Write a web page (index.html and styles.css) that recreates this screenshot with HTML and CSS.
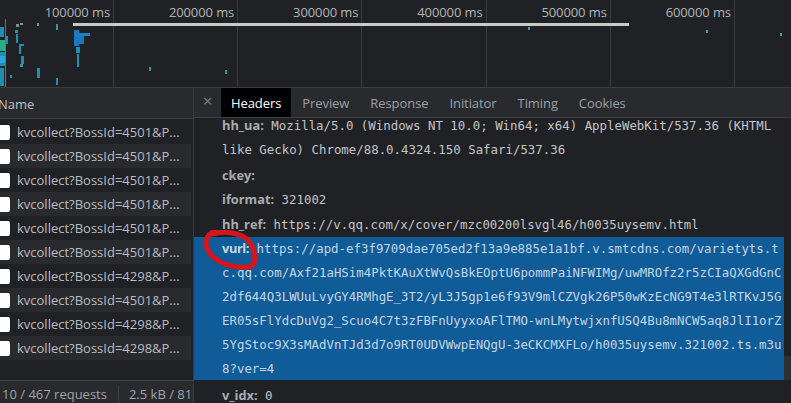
FILE: index.html
```html
<!DOCTYPE html>
<html lang="en">
<head>
<meta charset="utf-8">
<title>Network</title>
<link rel="stylesheet" href="styles.css">
</head>
<body>
<div class="overview">
  <div class="ticks">
    <div class="tick tick-first">100000 ms</div>
    <div class="tick">200000 ms</div>
    <div class="tick">300000 ms</div>
    <div class="tick">400000 ms</div>
    <div class="tick">500000 ms</div>
    <div class="tick">600000 ms</div>
    <div class="tick tick-last"></div>
  </div>
  <svg class="marks" width="791" height="87" viewBox="0 0 791 87">
    <rect x="73" y="23" width="556" height="3" fill="#c9c9c7"/>
    <g fill="#1d8fb3">
      <rect x="0" y="27" width="4" height="10"/>
      <rect x="0" y="52" width="5" height="14"/>
      <rect x="0" y="68" width="4" height="18"/>
      <rect x="6" y="36" width="2" height="8"/>
      <rect x="16" y="24" width="3" height="3" fill="#7f8f92"/>
      <rect x="20" y="23" width="3" height="2" fill="#7f8f92"/>
      <rect x="37" y="23" width="2" height="3" fill="#7f8f92"/>
      <rect x="56" y="24" width="2" height="6" fill="#3a8fa3"/>
      <rect x="15" y="30" width="3" height="3"/>
      <rect x="16" y="34" width="2" height="9"/>
      <rect x="19" y="44" width="5" height="2"/>
      <rect x="19" y="46" width="2" height="8"/>
      <rect x="21" y="56" width="3" height="8"/>
      <rect x="20" y="64" width="3" height="3" fill="#3a8fa3"/>
      <rect x="37" y="68" width="3" height="10"/>
      <rect x="10" y="75" width="2" height="3"/>
      <rect x="56" y="78" width="2" height="7"/>
      <rect x="74" y="30" width="5" height="16" fill="#1a78c0"/>
      <rect x="78" y="33" width="12" height="3" fill="#1a82c8"/>
      <rect x="78" y="36" width="6" height="8" fill="#1a78c0"/>
      <rect x="76" y="47" width="4" height="6"/>
      <rect x="77" y="54" width="2" height="13"/>
      <rect x="149" y="67" width="2" height="4" fill="#2f9aa5"/>
      <rect x="225" y="70" width="2" height="4" fill="#2f9aa5"/>
      <rect x="528" y="27" width="2" height="3" fill="#43a0a0"/>
      <rect x="706" y="30" width="2" height="3" fill="#43a0a0"/>
      <rect x="780" y="33" width="2" height="3" fill="#43a0a0"/>
    </g>
    <rect x="0" y="40" width="5" height="11" fill="#2bab86"/>
    <rect x="0" y="56" width="5" height="7" fill="#2aa6d8"/>
    <rect x="5" y="19" width="1" height="68" fill="#c9494f"/>
  </svg>
</div>
<div class="main">
  <section class="list">
    <div class="list-head"><span class="name-title">Name</span></div>
    <ul class="rows">
      <li class="row"><span class="check"></span><span class="req">kvcollect?BossId=4501&amp;P...</span></li>
      <li class="row row-alt"><span class="check"></span><span class="req">kvcollect?BossId=4501&amp;P...</span></li>
      <li class="row"><span class="check"></span><span class="req">kvcollect?BossId=4501&amp;P...</span></li>
      <li class="row row-alt"><span class="check"></span><span class="req">kvcollect?BossId=4501&amp;P...</span></li>
      <li class="row"><span class="check"></span><span class="req">kvcollect?BossId=4501&amp;P...</span></li>
      <li class="row row-alt"><span class="check"></span><span class="req">kvcollect?BossId=4501&amp;P...</span></li>
      <li class="row"><span class="check"></span><span class="req">kvcollect?BossId=4298&amp;P...</span></li>
      <li class="row row-alt"><span class="check"></span><span class="req">kvcollect?BossId=4501&amp;P...</span></li>
      <li class="row"><span class="check"></span><span class="req">kvcollect?BossId=4298&amp;P...</span></li>
      <li class="row row-alt"><span class="check"></span><span class="req">kvcollect?BossId=4298&amp;P...</span></li>
    </ul>
    <div class="status">
      <span class="status-item">10 / 467 requests</span>
      <span class="status-item status-next">2.5 kB / 81</span>
    </div>
  </section>
  <section class="detail">
    <div class="tabs">
      <span class="close">×</span>
      <span class="tab tab-on">Headers</span>
      <span class="tab">Preview</span>
      <span class="tab">Response</span>
      <span class="tab">Initiator</span>
      <span class="tab">Timing</span>
      <span class="tab">Cookies</span>
    </div>
    <div class="headers">
      <p class="item item-first"><b class="key">hh_ua:</b> Mozilla/5.0 (Windows NT 10.0; Win64; x64) AppleWebKit/537.36 (KHTML<br>like Gecko) Chrome/88.0.4324.150 Safari/537.36</p>
      <p class="item"><b class="key">ckey:</b></p>
      <p class="item"><b class="key">iformat:</b> 321002</p>
      <p class="item"><b class="key">hh_ref:</b> https://v.qq.com/x/cover/mzc00200lsvgl46/h0035uysemv.html</p>
      <p class="item item-sel"><b class="key key-sel">vurl:</b> https://apd-ef3f9709dae705ed2f13a9e885e1a1bf.v.smtcdns.com/varietyts.t<br>c.qq.com/Axf21aHSim4PktKAuXtWvQsBkEOptU6pommPaiNFWIMg/uwMROfz2r5zCIaQXGdGnC<br>2df644Q3LWUuLvyGY4RMhgE_3T2/yL3J5gp1e6f93V9mlCZVgk26P50wKzEcNG9T4e3lRTKvJ5G<br>ER05sFlYdcDuVg2_Scuo4C7t3zFBFnUyyxoAFlTMO-wnLMytwjxnfUSQ4Bu8mNCW5aq8JlI1orZ<br>5YgStoc9X3sMAdVnTJd3d7o9RT0UDVWwpENQgU-3eCKCMXFLo/h0035uysemv.321002.ts.m3u<br>8?ver=4</p>
      <p class="item"><b class="key">v_idx:</b> 0</p>
      <svg class="circle" width="60" height="46" viewBox="0 0 60 46">
        <path d="M12 1 C4 3 0 10 3 18 C6 27 16 33 28 36 C38 38 48 38 50 33 C52 25 49 15 43 9 C35 3 21 0 8 4" fill="none" stroke="#d5141c" stroke-width="5" stroke-linecap="round"/>
      </svg>
      <div class="scroll-thumb"></div>
    </div>
  </section>
</div>
</body>
</html>
```
FILE: styles.css
```css
* { box-sizing: border-box; }
html, body { margin: 0; height: 100%; overflow: hidden; }
body {
  background: #202124;
  color: #bdc1c6;
  font-family: "Open Sans", "Noto Sans", sans-serif;
  font-size: 13px;
  width: 791px;
  height: 403px;
  display: flex;
  flex-direction: column;
}
.overview {
  position: relative;
  height: 88px;
  flex: none;
  border-bottom: 1px solid #3a3b3d;
  overflow: hidden;
}
.ticks { display: flex; height: 100%; }
.tick {
  flex: none;
  width: 124.2px;
  border-right: 1px solid #3a3b3d;
  text-align: right;
  padding: 4px 3px 0 0;
  line-height: 17px;
  color: #b3b5b8;
  white-space: nowrap;
  letter-spacing: -0.1px;
}
.tick-first { width: 114px; }
.tick-last { flex: 1; border-right: 0; }
.marks { position: absolute; left: 0; top: 0; }
.main { flex: 1; display: flex; min-height: 0; }
.list {
  flex: none;
  width: 194px;
  border-right: 1px solid #3a3b3d;
  display: flex;
  flex-direction: column;
  overflow: hidden;
}
.list-head {
  height: 31px;
  flex: none;
  background: #292a2d;
  border-bottom: 1px solid #3f4042;
  display: flex;
  align-items: center;
  padding-top: 1px;
}
.name-title { margin-left: -2px; color: #bdc1c6; }
.rows { list-style: none; margin: 0; padding: 1px 0 0; flex: 1; background: #202124; }
.row {
  height: 24px;
  margin-right: 2px;
  display: flex;
  align-items: center;
  gap: 7px;
}
.row-alt { background: #292a2d; }
.check {
  flex: none;
  width: 15px;
  height: 15px;
  margin-left: -5px;
  background: #fff;
  border-radius: 2px;
}
.req { color: #b9bcc0; white-space: nowrap; }
.status {
  height: 23px;
  flex: none;
  background: #292a2d;
  border-top: 1px solid #3f4042;
  display: flex;
  align-items: flex-start;
  padding-top: 5px;
  line-height: 17px;
  white-space: nowrap;
  color: #a0a3a7;
}
.status-item { padding-left: 2px; padding-right: 11px; }
.status-next { border-left: 1px solid #3f4042; padding-left: 10px; }
.detail {
  flex: 1;
  min-width: 0;
  display: flex;
  flex-direction: column;
  overflow: hidden;
}
.tabs {
  height: 30px;
  flex: none;
  background: #292a2d;
  border-bottom: 1px solid #3f4042;
  display: flex;
  align-items: stretch;
  color: #9aa0a6;
}
.close {
  width: 27px;
  flex: none;
  text-align: center;
  font-size: 17px;
  line-height: 26px;
  color: #7d8084;
}
.tab { padding: 0 10px; line-height: 31px; white-space: nowrap; margin-right: 1px; letter-spacing: -0.08px; }
.tab-on { background: #000; color: #fff; height: 29px; }
.headers {
  position: relative;
  flex: 1;
  min-height: 0;
  font-family: "DejaVu Sans Mono", monospace;
  font-size: 12.4px;
  color: #c3c5c8;
  white-space: nowrap;
  overflow: hidden;
}
.item { margin: 0; padding: 0 7px 0 28px; min-height: 24.6px; line-height: 24.3px; }
.item-first { margin-top: -4px; margin-bottom: 2.4px; line-height: 23.6px; }
.item-sel {
  background: #0f5c99;
  color: #c6d6e4;
  margin-right: 7px;
  padding-right: 0;
  height: 143px;
  line-height: 24px;
  margin-bottom: 3.5px;
}
.key { font-family: "Open Sans", sans-serif; font-size: 12.8px; font-weight: 700; color: #a9acb0; line-height: 1; }
.key-sel { color: #c6d6e4; letter-spacing: -0.4px; }
.circle { position: absolute; left: 10px; top: 112px; }
.scroll-thumb {
  position: absolute;
  right: 0;
  top: 238px;
  width: 7px;
  height: 24px;
  background: #2f3033;
}
```
